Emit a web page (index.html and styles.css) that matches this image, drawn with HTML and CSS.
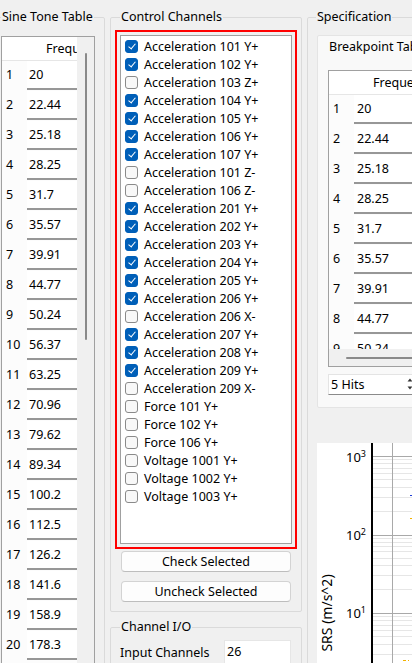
FILE: index.html
```html
<!DOCTYPE html>
<html lang="en">
<head>
    <meta charset="UTF-8">
    <meta name="viewport" content="width=device-width, initial-scale=1.0">
    <title>SRS - Sine Tone</title>
    <link rel="stylesheet" href="styles.css">
</head>
<body>
    <div class="app">
        <!-- Sine tone table (left) -->
        <fieldset class="grp grp-sine">
            <legend>Sine Tone Table</legend>
            <div class="tbl tbl-sine">
                <div class="tbl-view">
                    <div class="tr tr-head"><div class="rh"></div><div class="hc">Frequ</div></div>
                    <div class="tr"><div class="rh">1</div><div class="cell">20</div></div>
                    <div class="tr"><div class="rh">2</div><div class="cell">22.44</div></div>
                    <div class="tr"><div class="rh">3</div><div class="cell">25.18</div></div>
                    <div class="tr"><div class="rh">4</div><div class="cell">28.25</div></div>
                    <div class="tr"><div class="rh">5</div><div class="cell">31.7</div></div>
                    <div class="tr"><div class="rh">6</div><div class="cell">35.57</div></div>
                    <div class="tr"><div class="rh">7</div><div class="cell">39.91</div></div>
                    <div class="tr"><div class="rh">8</div><div class="cell">44.77</div></div>
                    <div class="tr"><div class="rh">9</div><div class="cell">50.24</div></div>
                    <div class="tr"><div class="rh">10</div><div class="cell">56.37</div></div>
                    <div class="tr"><div class="rh">11</div><div class="cell">63.25</div></div>
                    <div class="tr"><div class="rh">12</div><div class="cell">70.96</div></div>
                    <div class="tr"><div class="rh">13</div><div class="cell">79.62</div></div>
                    <div class="tr"><div class="rh">14</div><div class="cell">89.34</div></div>
                    <div class="tr"><div class="rh">15</div><div class="cell">100.2</div></div>
                    <div class="tr"><div class="rh">16</div><div class="cell">112.5</div></div>
                    <div class="tr"><div class="rh">17</div><div class="cell">126.2</div></div>
                    <div class="tr"><div class="rh">18</div><div class="cell">141.6</div></div>
                    <div class="tr"><div class="rh">19</div><div class="cell">158.9</div></div>
                    <div class="tr"><div class="rh">20</div><div class="cell">178.3</div></div>
                </div>
                <div class="vscroll"><div class="vthumb"></div></div>
            </div>
        </fieldset>

        <!-- Channels (middle) -->
        <div class="col-mid">
            <fieldset class="grp grp-ctrl">
                <legend>Control Channels</legend>
                <div class="red-frame">
                    <div class="chan-list">
                        <div class="chan"><span class="box on"></span>Acceleration 101 Y+</div>
                        <div class="chan"><span class="box on"></span>Acceleration 102 Y+</div>
                        <div class="chan"><span class="box"></span>Acceleration 103 Z+</div>
                        <div class="chan"><span class="box on"></span>Acceleration 104 Y+</div>
                        <div class="chan"><span class="box on"></span>Acceleration 105 Y+</div>
                        <div class="chan"><span class="box on"></span>Acceleration 106 Y+</div>
                        <div class="chan"><span class="box on"></span>Acceleration 107 Y+</div>
                        <div class="chan"><span class="box"></span>Acceleration 101 Z-</div>
                        <div class="chan"><span class="box"></span>Acceleration 106 Z-</div>
                        <div class="chan"><span class="box on"></span>Acceleration 201 Y+</div>
                        <div class="chan"><span class="box on"></span>Acceleration 202 Y+</div>
                        <div class="chan"><span class="box on"></span>Acceleration 203 Y+</div>
                        <div class="chan"><span class="box on"></span>Acceleration 204 Y+</div>
                        <div class="chan"><span class="box on"></span>Acceleration 205 Y+</div>
                        <div class="chan"><span class="box on"></span>Acceleration 206 Y+</div>
                        <div class="chan"><span class="box"></span>Acceleration 206 X-</div>
                        <div class="chan"><span class="box on"></span>Acceleration 207 Y+</div>
                        <div class="chan"><span class="box on"></span>Acceleration 208 Y+</div>
                        <div class="chan"><span class="box on"></span>Acceleration 209 Y+</div>
                        <div class="chan"><span class="box"></span>Acceleration 209 X-</div>
                        <div class="chan"><span class="box"></span>Force 101 Y+</div>
                        <div class="chan"><span class="box"></span>Force 102 Y+</div>
                        <div class="chan"><span class="box"></span>Force 106 Y+</div>
                        <div class="chan"><span class="box"></span>Voltage 1001 Y+</div>
                        <div class="chan"><span class="box"></span>Voltage 1002 Y+</div>
                        <div class="chan"><span class="box"></span>Voltage 1003 Y+</div>
                    </div>
                </div>
                <button class="btn btn-first">Check Selected</button>
                <button class="btn">Uncheck Selected</button>
            </fieldset>

            <fieldset class="grp grp-io">
                <legend>Channel I/O</legend>
                <div class="io-row">
                    <span class="io-label">Input Channels</span>
                    <span class="num">26</span>
                </div>
            </fieldset>
        </div>

        <!-- Specification (right) -->
        <fieldset class="grp grp-spec">
            <legend>Specification</legend>
            <div class="bp-panel">
                <div class="bp-title">Breakpoint Table</div>
                <div class="tbl tbl-bp">
                    <div class="tbl-view bp-view">
                        <div class="tr tr-head"><div class="rh"></div><div class="hc">Frequency (Hz)</div></div>
                        <div class="tr"><div class="rh">1</div><div class="cell">20</div></div>
                        <div class="tr"><div class="rh">2</div><div class="cell">22.44</div></div>
                        <div class="tr"><div class="rh">3</div><div class="cell">25.18</div></div>
                        <div class="tr"><div class="rh">4</div><div class="cell">28.25</div></div>
                        <div class="tr"><div class="rh">5</div><div class="cell">31.7</div></div>
                        <div class="tr"><div class="rh">6</div><div class="cell">35.57</div></div>
                        <div class="tr"><div class="rh">7</div><div class="cell">39.91</div></div>
                        <div class="tr"><div class="rh">8</div><div class="cell">44.77</div></div>
                        <div class="tr"><div class="rh">9</div><div class="cell">50.24</div></div>
                    </div>
                    <div class="hscroll"><div class="hthumb"></div></div>
                </div>
                <div class="spin">
                    <span class="spin-text">5 Hits</span>
                    <span class="spin-btns">
                        <svg width="8" height="9" viewBox="0 0 8 9"><path d="M1.5 6.5 L4 3.5 L6.5 6.5 Z" fill="#333"/></svg>
                        <svg width="8" height="9" viewBox="0 0 8 9"><path d="M1.5 2.5 L4 5.5 L6.5 2.5 Z" fill="#333"/></svg>
                    </span>
                </div>
            </div>

            <svg class="srs-chart" width="130" height="220" viewBox="0 0 130 220">
                <!-- minor grid -->
                <g stroke="#e6e6e6" stroke-width="1">
                    <path d="M55 16.5H130M55 20.5H130M55 25.5H130M55 30.5H130M55 36.5H130M55 44.5H130M55 54.5H130M55 68.5H130"/>
                    <path d="M55 95.5H130M55 99.5H130M55 103.5H130M55 108.5H130M55 115.5H130M55 122.5H130M55 132.5H130M55 146.5H130"/>
                    <path d="M55 173.5H130M55 177.5H130M55 182.5H130M55 187.5H130M55 193.5H130M55 201.5H130M55 211.5H130"/>
                </g>
                <!-- major grid -->
                <g stroke="#a9a9a9" stroke-width="1">
                    <path d="M55 13.5H130M55 92.5H130M55 170.5H130"/>
                    <path d="M75.5 0V220"/>
                </g>
                <path d="M55 0V220" stroke="#000" stroke-width="2"/>
                <g class="tick" text-anchor="end">
                    <text x="49" y="19">10<tspan dy="-5" font-size="9">3</tspan></text>
                    <text x="49" y="97">10<tspan dy="-5" font-size="9">2</tspan></text>
                    <text x="49" y="175">10<tspan dy="-5" font-size="9">1</tspan></text>
                </g>
                <text class="axis-title" transform="translate(15,170) rotate(-90)" text-anchor="middle">SRS (m/s^2)</text>
                <!-- curve fragments at the right edge -->
                <path d="M93 52.5H96" stroke="#1f3fd8" stroke-width="1"/>
                <path d="M93 75.5H96" stroke="#f2b200" stroke-width="1"/>
                <path d="M86 217.5H89M91 217.5H92" stroke="#f2b200" stroke-width="1"/>
            </svg>
        </fieldset>
    </div>
</body>
</html>
```

FILE: styles.css
```css
/* Janela estilo Windows 11 */
* {
    box-sizing: border-box;
}

body {
    margin: 0;
    background-color: #f0f0f0;
    font-family: "Noto Sans", sans-serif;
    font-size: 12.5px;
    color: #000;
    overflow: hidden;
}

.app {
    display: flex;
    align-items: flex-start;
    gap: 5px;
    height: 663px;
    padding-top: 9px;
    overflow: hidden;
}

/* Group boxes */
.grp {
    margin: 0;
    border: 1px solid #dadada;
    border-radius: 2px;
    min-width: 0;
}

.grp legend {
    padding: 0 1px;
    line-height: 16px;
}

.grp-sine {
    flex: none;
    width: 115px;
    height: 720px;
    margin-left: -10px;
    padding: 11px 9px 0 10px;
}

.col-mid {
    flex: none;
    width: 192px;
    display: flex;
    flex-direction: column;
}

.grp-ctrl {
    padding: 5px 4px 9px 4px;
}

.grp-ctrl legend,
.grp-io legend {
    margin-left: 5px;
}

.grp-io {
    margin-top: 7px;
    height: 80px;
    padding: 5px 4px 0 4px;
}

.grp-spec {
    flex: none;
    width: 140px;
    height: 720px;
    padding: 10px 0 0 9px;
}

.grp-spec legend {
    margin-left: -1px;
}

/* Tables */
.tbl {
    border: 1px solid #a0a0a0;
    background-color: #fcfcfc;
    overflow: hidden;
}

.tbl-sine {
    display: flex;
    width: 94px;
    height: 700px;
}

.tbl-view {
    width: 75px;
    overflow: hidden;
}

.tr {
    display: flex;
    height: 30px;
}

.tr-head {
    height: 24px;
    background-color: #fff;
    border-bottom: 1px solid #e6e6e6;
}

.rh {
    flex: none;
    width: 25px;
    padding-left: 4px;
    line-height: 27px;
}

.hc {
    flex: none;
    width: 130px;
    padding-left: 19px;
    line-height: 23px;
    white-space: nowrap;
}

.tbl-sine .hc {
    width: 50px;
    overflow: hidden;
}

.cell {
    flex: none;
    width: 130px;
    height: 29px;
    padding-left: 2px;
    line-height: 27px;
    background-color: #fff;
    border-bottom: 2px solid #979797;
}

.vscroll {
    flex: none;
    width: 17px;
    background-color: #f0f0f0;
}

.vthumb {
    width: 2px;
    height: 287px;
    margin: 16px 0 0 8px;
    background-color: #8a8a8a;
    border-radius: 1px;
}

/* Control channels */
.red-frame {
    height: 519px;
    padding: 3px;
    border: 2px solid #ff0000;
}

.chan-list {
    height: 509px;
    padding: 1px 0 0 4px;
    background-color: #fff;
    border: 1px solid #a0a0a0;
}

.chan {
    display: flex;
    align-items: center;
    gap: 6px;
    height: 18px;
    white-space: nowrap;
}

.box {
    position: relative;
    flex: none;
    width: 13px;
    height: 13px;
    margin-top: 1px;
    border: 1px solid #8a8a8a;
    border-radius: 3px;
    background-color: #f8f8f8;
}

.box.on {
    border-color: #005fb8;
    background-color: #005fb8;
}

.box.on::after {
    content: "";
    position: absolute;
    left: 3.5px;
    top: 1px;
    width: 3px;
    height: 6px;
    border: solid #fff;
    border-width: 0 1.2px 1.2px 0;
    transform: rotate(40deg);
}

.btn {
    display: block;
    width: 170px;
    height: 21px;
    margin: 9px 0 0 6px;
    padding: 0;
    font: inherit;
    line-height: 19px;
    color: #000;
    background-color: #fdfdfd;
    border: 1px solid #d3d3d3;
    border-bottom-color: #bdbdbd;
    border-radius: 4px;
}

.btn-first {
    margin-top: 2px;
}

/* Channel I/O */
.io-row {
    display: flex;
    align-items: center;
}

.io-label {
    width: 104px;
    margin-left: 5px;
}

.num {
    width: 67px;
    height: 24px;
    padding-left: 2px;
    line-height: 22px;
    background-color: #fff;
    border: 1px solid #e6e6e6;
    border-bottom-color: #8a8a8a;
}

/* Specification */
.bp-panel {
    width: 131px;
    height: 373px;
    padding: 3px 0 0 10px;
    background-color: #f9f9f9;
    border: 1px solid #e4e4e4;
    border-radius: 2px;
}

.bp-title {
    margin-left: 1px;
    line-height: 16px;
    white-space: nowrap;
}

.tbl-bp {
    width: 130px;
    margin-top: 15px;
}

.bp-view {
    width: auto;
    height: 278px;
}

.bp-view .cell {
    padding-left: 3px;
}

.hscroll {
    height: 17px;
    padding-top: 8px;
    background-color: #f0f0f0;
}

.hthumb {
    height: 2px;
    margin-left: 17px;
    background-color: #8a8a8a;
    border-radius: 1px;
}

.spin {
    display: flex;
    width: 88px;
    height: 21px;
    margin-top: 7px;
    background-color: #fff;
    border: 1px solid #e4e4e4;
    border-bottom-color: #8a8a8a;
}

.spin-text {
    padding-left: 2px;
    line-height: 19px;
}

.spin-btns {
    display: flex;
    flex-direction: column;
    margin-left: auto;
    margin-right: 1px;
}

.spin-btns svg {
    display: block;
}

.srs-chart {
    display: block;
    margin-top: 35px;
    background-color: #fff;
}

.tick {
    font-family: "Noto Sans", sans-serif;
    font-size: 13px;
    fill: #000;
}

.axis-title {
    font-family: "Noto Sans", sans-serif;
    font-size: 14px;
    fill: #000;
}
```
